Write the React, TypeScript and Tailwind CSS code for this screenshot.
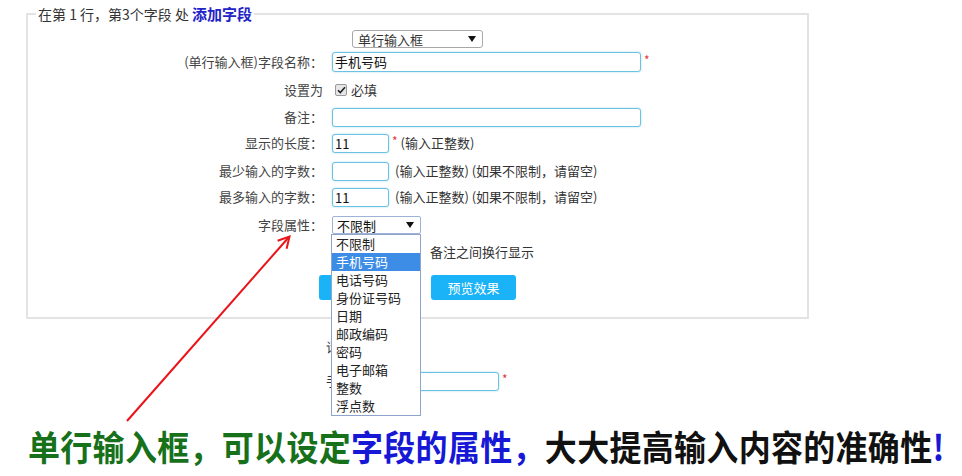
import React from 'react';

const Caret = () => (
    <svg width="8" height="6" viewBox="0 0 8 6" className="shrink-0">
        <path d="M0 0h8L4 6z" fill="#111" />
    </svg>
);

const Star = () => <span className="ml-[3px] text-[#e4393c] text-[12px] leading-none -mt-[4px]">*</span>;

interface RowProps {
    label?: string;
    className?: string;
    children?: React.ReactNode;
}

// label column is right aligned, controls start at x=332
const Row: React.FC<RowProps> = ({ label, className = '', children }) => (
    <div className={`flex items-center h-[22px] ${className}`}>
        <div className="w-[295px] shrink-0 text-right text-[#444]">{label}</div>
        <div className="ml-[9px] flex items-center">{children}</div>
    </div>
);

const inputCls =
    'h-[19px] border border-[#6cc2e2] rounded-[3px] bg-white px-[2px] text-[13px] text-[#111] leading-[17px] shadow-[0_0_2px_rgba(102,190,225,0.6)]';

const OPTIONS = ['不限制', '手机号码', '电话号码', '身份证号码', '日期', '邮政编码', '密码', '电子邮箱', '整数', '浮点数'];

export default function App() {
    return (
        <div className="relative w-[962px] h-[476px] overflow-hidden bg-white text-[13px] text-[#333] font-['Noto_Sans_CJK_SC',sans-serif]">
            <fieldset className="ml-[26px] mt-[5px] w-[783px] h-[314px] border-2 border-[#e3e3e3]">
                <legend className="ml-[8px] px-[2px] leading-[18px] text-[14px] text-[#333]">
                    在第 1 行，第3个字段 处 <span className="font-bold text-[15px] text-[#2323c8]">添加字段</span>
                </legend>

                <div className="mt-[7px] ml-[324px] flex items-center h-[18px] w-[131px] border border-[#a8a8a8] rounded-[3px] pl-[5px] pr-[6px] justify-between">
                    <span className="leading-none">单行输入框</span>
                    <Caret />
                </div>

                <Row label="(单行输入框)字段名称：" className="mt-[3px]">
                    <div className={`${inputCls} h-[20px] w-[309px] border-[#5bbde0]`}>手机号码</div>
                    <Star />
                </Row>

                <Row label="设置为" className="mt-[6px]">
                    <span className="ml-[3px] w-[12px] h-[12px] border border-[#9a9a9a] bg-[#e6e6e6] rounded-[2px] flex items-center justify-center">
                        <svg width="9" height="8" viewBox="0 0 9 8">
                            <path d="M1 4.2l2.3 2.3L8 1.3" stroke="#222" strokeWidth="1.6" fill="none" />
                        </svg>
                    </span>
                    <span className="ml-[4px] text-[#333]">必填</span>
                </Row>

                <Row label="备注：" className="mt-[5px]">
                    <div className={`${inputCls} w-[309px]`} />
                </Row>

                <Row label="显示的长度：" className="mt-[4px]">
                    <div className={`${inputCls} w-[57px]`}>11</div>
                    <Star />
                    <span className="ml-[3px]">(输入正整数)</span>
                </Row>

                <Row label="最少输入的字数：" className="mt-[6px]">
                    <div className={`${inputCls} w-[57px]`} />
                    <span className="ml-[6px]">(输入正整数) (如果不限制，请留空)</span>
                </Row>

                <Row label="最多输入的字数：" className="mt-[4px]">
                    <div className={`${inputCls} w-[57px]`}>11</div>
                    <span className="ml-[6px]">(输入正整数) (如果不限制，请留空)</span>
                </Row>

                <Row label="字段属性：" className="mt-[6px]">
                    <div className="flex items-center justify-between h-[18px] w-[89px] border border-[#9fb3d8] rounded-[2px] pl-[4px] pr-[6px]">
                        <span className="leading-none text-[#111]">不限制</span>
                        <Caret />
                    </div>
                </Row>

                <Row className="mt-[5px]">
                    <span className="w-[12px] h-[12px] border border-[#999] rounded-[2px]" />
                    <span className="ml-[8px]">在字段名称</span>
                    <span className="ml-[13px]">备注之间换行显示</span>
                </Row>

                <div className="mt-[12px] ml-[291px] flex gap-[27px]">
                    <button className="w-[85px] h-[25px] rounded-[3px] bg-[#1ab3f7] text-white">保存字段</button>
                    <button className="w-[85px] h-[25px] rounded-[3px] bg-[#1ab3f7] text-white">预览效果</button>
                </div>
            </fieldset>

            <div className="mt-[17px] h-[22px] flex items-center pl-[326px]">请选择字段：</div>
            <div className="mt-[12px] h-[22px] flex items-center pl-[326px]">
                <span>手机号码：</span>
                <div className={`${inputCls} ml-[9px] w-[99px]`} />
                <Star />
            </div>

            <div className="mt-[38px] ml-[28px] flex text-[32px] leading-[32px] font-bold tracking-[0.3px] whitespace-nowrap scale-y-[1.1]">
                <span className="text-[#17701a]">单行输入框，可以设定</span>
                <span className="text-[#1717d6]">字段的属性，</span>
                <span className="text-[#111]">大大提高输入内容的准确性</span>
                <span className="text-[#1717d6]">!</span>
            </div>

            {/* dropdown opened over the form */}
            <div className="absolute left-[331px] top-[234px] w-[90px] h-[182px] border border-[#8ea4cc] bg-white">
                {OPTIONS.map((o, i) => (
                    <div
                        key={o}
                        className={`h-[18px] leading-[18px] pl-[4px] ${i === 1 ? 'bg-[#3d8de6] text-white' : 'text-[#222]'}`}
                    >
                        {o}
                    </div>
                ))}
            </div>

            {/* annotation arrow */}
            <svg className="absolute left-0 top-0 pointer-events-none" width="962" height="476">
                <line x1="127" y1="421" x2="289" y2="237" stroke="#e8141a" strokeWidth="2" />
                <path d="M277.6 240.8L289.5 236.5L286.6 248.8" stroke="#e8141a" strokeWidth="2" fill="none" />
            </svg>
        </div>
    );
}
